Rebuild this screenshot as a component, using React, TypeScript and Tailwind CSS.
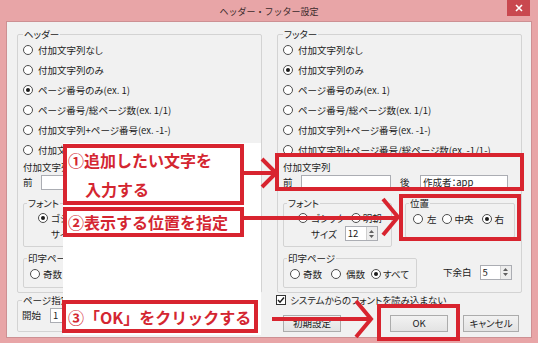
import type { ReactNode } from "react"

function Radio({ on }: { on?: boolean }) {
  return (
    <span className="flex h-[10px] w-[10px] shrink-0 items-center justify-center rounded-full border border-[#4d4d4d] bg-white">
      {on && <span className="h-[4px] w-[4px] rounded-full bg-[#1a1a1a]" />}
    </span>
  )
}

function Group({ title, className = "", children }: { title: string; className?: string; children: ReactNode }) {
  return (
    <fieldset className={`rounded-[2px] border border-[#d3d3d3] ${className}`}>
      <legend className="px-[1px] leading-[12px]">{title}</legend>
      {children}
    </fieldset>
  )
}

function Spin({ value, className = "" }: { value: string; className?: string }) {
  return (
    <div className={`flex h-[15px] shrink-0 border border-[#abadb3] bg-white ${className}`}>
      <span className="flex-1 pl-[2px] leading-[13px]">{value}</span>
      <span className="flex w-[11px] items-center justify-center border-l border-[#cfcfcf] bg-[#ededed]">
        <svg width="7" height="10" viewBox="0 0 7 10">
          <path d="M3.5 1L6 4H1Z M3.5 9L6 6H1Z" fill="#606060" />
        </svg>
      </span>
    </div>
  )
}

function TextBox({ value, className = "" }: { value: string; className?: string }) {
  return (
    <div className={`h-[15px] shrink-0 overflow-hidden whitespace-nowrap border border-[#abadb3] bg-white pl-[2px] leading-[13px] ${className}`}>
      {value}
    </div>
  )
}

const options = [
  "付加文字列なし",
  "付加文字列のみ",
  "ページ番号のみ(ex. 1)",
  "ページ番号/総ページ数(ex. 1/1)",
  "付加文字列+ページ番号(ex. -1-)",
  "付加文字列+ページ番号/総ページ数(ex. -1/1-)",
]

function Section({ title, picked, after }: { title: string; picked: number; after: string }) {
  return (
    <Group title={title} className="px-[5px] pb-[4px]">
      {options.map((o, i) => (
        <div key={o} className="flex h-[20px] items-center gap-[5px]">
          <Radio on={i === picked} />
          <span className="whitespace-nowrap">{o}</span>
        </div>
      ))}
      <div className="mt-[1px] leading-[12px]">付加文字列</div>
      <div className="mt-[1px] flex h-[16px] items-center">
        <span className="w-[18px] shrink-0">前</span>
        <TextBox value="" className="w-[90px]" />
        <span className="w-[29px] shrink-0 pl-[9px]">後</span>
        <TextBox value={after} className="w-[88px]" />
      </div>

      <div className="mt-[7px] flex items-start gap-[13px]">
        <Group title="フォント" className="w-[109px] shrink-0 px-[3px] pb-[5px]">
          <div className="flex h-[17px] items-center pl-[11px]">
            <Radio on />
            <span className="ml-[3px]">ゴシック</span>
            <span className="ml-[6px]">
              <Radio />
            </span>
            <span className="ml-[2px]">明朝</span>
          </div>
          <div className="flex h-[15px] items-center pl-[24px]">
            <span>サイズ</span>
            <Spin value="12" className="ml-[8px] w-[33px]" />
          </div>
        </Group>
        <Group title="位置" className="w-[110px] shrink-0 px-[3px] pb-[8px]">
          <div className="flex h-[20px] items-center pl-[4px]">
            <Radio />
            <span className="ml-[4px]">左</span>
            <span className="ml-[5px]">
              <Radio />
            </span>
            <span className="ml-[3px]">中央</span>
            <span className="ml-[8px]">
              <Radio on />
            </span>
            <span className="ml-[3px]">右</span>
          </div>
        </Group>
      </div>

      <div className="mt-[5px] flex items-center">
        <Group title="印字ページ" className="w-[134px] shrink-0 px-[3px] pb-[3px]">
          <div className="flex h-[20px] items-center pl-[3px]">
            <Radio />
            <span className="ml-[3px]">奇数</span>
            <span className="ml-[9px]">
              <Radio />
            </span>
            <span className="ml-[5px]">偶数</span>
            <span className="ml-[6px]">
              <Radio on />
            </span>
            <span className="ml-[2px]">すべて</span>
          </div>
        </Group>
        <div className="ml-[26px] mt-[4px] flex items-center">
          <span>下余白</span>
          <Spin value="5" className="ml-[8px] w-[32px]" />
        </div>
      </div>
    </Group>
  )
}

function WinButton({ children, className = "" }: { children: ReactNode; className?: string }) {
  return (
    <button className={`h-[17px] shrink-0 border border-[#acacac] bg-gradient-to-b from-[#f2f2f2] to-[#e3e3e3] leading-[15px] ${className}`}>
      {children}
    </button>
  )
}

export default function App() {
  return (
    <div className="relative flex h-[343px] w-[538px] flex-col overflow-hidden bg-[#e8a5a7] font-['Noto_Sans_CJK_JP',sans-serif] text-[9.5px] leading-[12px] text-[#1c1c1c] [font-feature-settings:'palt']">
      {/* title bar */}
      <div className="relative flex h-[21px] shrink-0 items-center justify-center">
        <span className="pt-[2px] text-[9px] text-[#3b2b2c] [font-feature-settings:normal]">ヘッダー・フッター設定</span>
        <button className="absolute right-[8px] top-0 flex h-[16px] w-[23px] items-center justify-center bg-[#c9484f]">
          <svg width="8" height="8" viewBox="0 0 8 8">
            <path d="M1 1L7 7M7 1L1 7" stroke="white" strokeWidth="1.6" />
          </svg>
        </button>
      </div>

      {/* client area */}
      <div className="mx-[6px] h-[317px] shrink-0 border border-[#cd9093] bg-[#f1f1f1] px-[10px] pt-[6px]">
        <div className="grid grid-cols-[245px_245px] gap-x-[15px]">
          <Section title="ヘッダー" picked={2} after="" />
          <Section title="フッター" picked={1} after="作成者：app" />

          <Group title="ページ指定" className="mt-[1px] w-[240px] px-[4px] pb-[6px]">
            <div className="flex h-[18px] items-center">
              <span>開始</span>
              <TextBox value="1" className="ml-[9px] w-[40px]" />
            </div>
          </Group>

          <div className="flex flex-col">
            <div className="ml-[-1px] mt-[1px] flex h-[12px] items-center gap-[4px]">
              <span className="flex h-[10px] w-[10px] items-center justify-center border border-[#333] bg-white">
                <svg width="8" height="8" viewBox="0 0 8 8">
                  <path d="M1 4L3 6.2L7 1.5" fill="none" stroke="#1a1a1a" strokeWidth="1.4" />
                </svg>
              </span>
              <span className="whitespace-nowrap">システムからのフォントを読み込まない</span>
            </div>
            <div className="mt-[9px] flex pl-[6px]">
              <WinButton className="w-[58px]">初期設定</WinButton>
              <WinButton className="ml-[49px] w-[58px]">OK</WinButton>
              <WinButton className="ml-[15px] w-[56px]">キャンセル</WinButton>
            </div>
          </div>
        </div>
      </div>

      {/* annotations */}
      <div className="absolute left-[63px] top-[143px] h-[192px] w-[198px] bg-white" />
      <div className="absolute left-[63px] top-[144px] flex h-[61px] w-[181px] flex-col border-[4px] border-[#d8242f] pl-[1px] text-[16px] font-bold leading-[24px] text-[#d42631] [font-feature-settings:normal]">
        <span>①追加したい文字を</span>
        <span className="mt-[5px] pl-[17px]">入力する</span>
      </div>
      <div className="absolute left-[63px] top-[207px] h-[30px] w-[181px] border-[4px] border-[#d8242f] pl-[1px] text-[16px] font-bold leading-[22px] text-[#d42631] [font-feature-settings:normal]">
        ②表示する位置を指定
      </div>
      <div className="absolute left-[62px] top-[300px] h-[33px] w-[196px] border-[4px] border-[#d8242f] pl-[2px] pt-[1px] text-[16px] font-bold leading-[24px] text-[#d42631] [font-feature-settings:normal]">
        ③「OK」をクリックする
      </div>
      <div className="absolute left-[275px] top-[153px] h-[38px] w-[249px] border-[4px] border-[#d8242f]" />
      <div className="absolute left-[399px] top-[194px] h-[47px] w-[122px] border-[4px] border-[#d8242f]" />
      <div className="absolute left-[377px] top-[304px] h-[37px] w-[83px] border-[4px] border-[#d8242f]" />

      <svg className="pointer-events-none absolute left-0 top-0" width="538" height="343">
        <g fill="none" stroke="#d8242f" strokeWidth="4">
          <path d="M244 173H275M262 159L276 173L262 187" />
          <path d="M244 218H396M383 199L398 217L383 235" />
          <path d="M272 319H369M356 301L371 319L356 337" />
        </g>
      </svg>
    </div>
  )
}
